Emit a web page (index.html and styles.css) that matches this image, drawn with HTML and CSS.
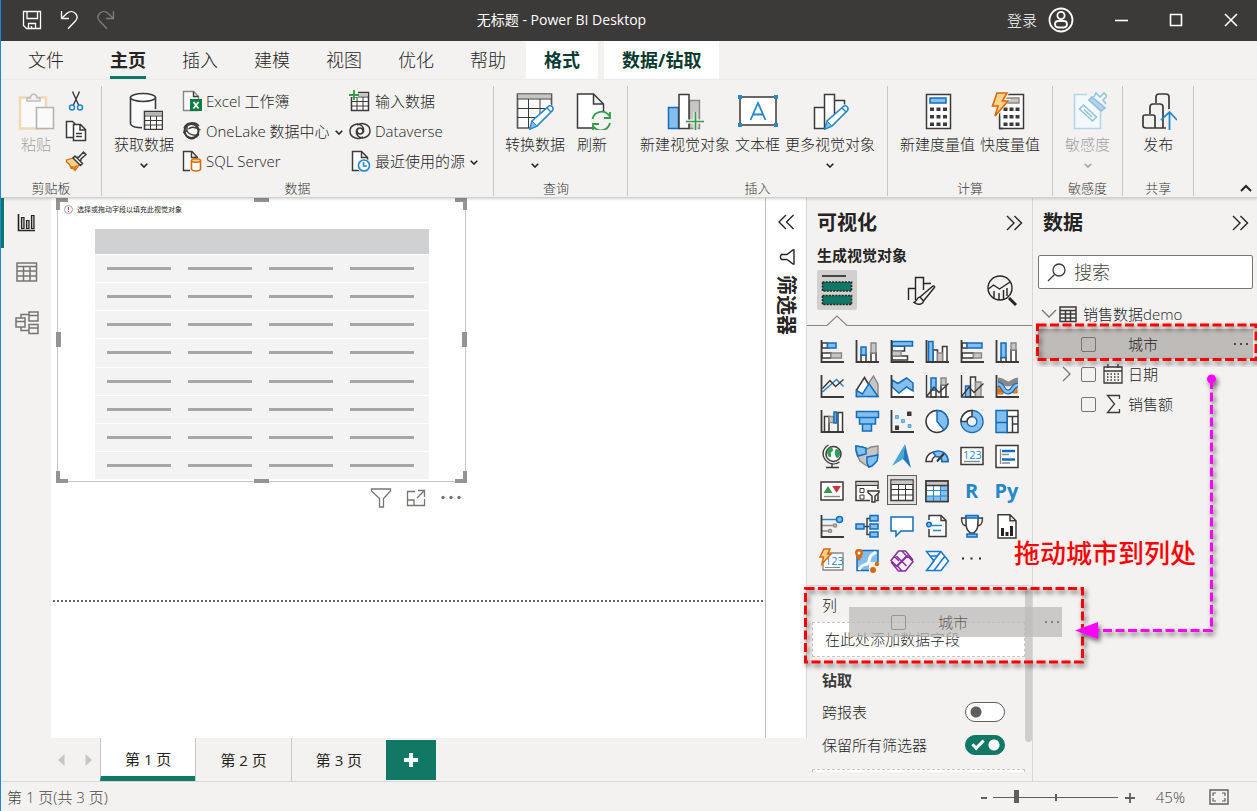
FILE: index.html
```html
<!DOCTYPE html>
<html lang="zh-CN">
<head>
<meta charset="utf-8">
<title>无标题 - Power BI Desktop</title>
<link rel="stylesheet" href="styles.css">
</head>
<body>
<div class="app">
<header class="titlebar">
  <div class="quick">
    <button aria-label="保存"><svg width="20" height="20" viewBox="0 0 20 20"><path class="wl" d="M1.500 1.500h17v17h-14l-3-3zM5 1.500v7h10.500v-7M6.500 18.500v-5h7v5M9.500 18.500v-2.500"/></svg></button>
    <button aria-label="撤消"><svg width="20" height="20" viewBox="0 0 20 20"><path class="wl" d="M2.500 1v7.500H10M2.500 8.500L8 3.200c3-2.500 6.500-2 8.500.3s2 5.500-.3 7.800L9 18.800"/></svg></button>
    <button aria-label="恢复"><svg width="20" height="20" viewBox="0 0 20 20"><path class="wl dim" d="M17.500 1v7.500H10M17.500 8.500L12 3.200c-3-2.500-6.500-2-8.500.3s-2 5.500.3 7.800l7.200 7.500"/></svg></button>
  </div>
  <h1>无标题 - Power BI Desktop</h1>
  <button class="login">登录 <svg width="26" height="26" viewBox="0 0 26 26"><circle cx="13" cy="13" r="11.500" fill="none" stroke="#fff" stroke-width="1.800"/><circle cx="13" cy="8.500" r="3.600" fill="none" stroke="#fff" stroke-width="1.800"/><rect x="7" y="14" width="12" height="6.500" rx="3.200" fill="none" stroke="#fff" stroke-width="1.800"/></svg></button>
  <div class="winctl">
    <button aria-label="最小化"><svg width="14" height="14" viewBox="0 0 14 14"><path class="wl2" d="M1 7.500h13"/></svg></button>
    <button aria-label="最大化"><svg width="14" height="14" viewBox="0 0 14 14"><path class="wl2" d="M1.500 1.500h11v11h-11z"/></svg></button>
    <button aria-label="关闭"><svg width="14" height="14" viewBox="0 0 14 14"><path class="wl2" d="M1 1l12 12M13 1L1 13"/></svg></button>
  </div>
</header>

<nav class="menu">
  <button class="file">文件</button><button class="on"><span>主页</span></button><button>插入</button><button>建模</button><button>视图</button><button>优化</button><button>帮助</button><button class="ctx">格式</button><button class="ctx">数据/钻取</button>
</nav>

<section class="ribbon">
  <div class="group clip">
    <div class="tools">
      <button class="big off"><svg width="38" height="38" viewBox="0 0 38 38"><path d="M3 5.500h26v31H3z" fill="#fafafa" stroke="#f0d9b4" stroke-width="2.500"/><path d="M10 9V6h3.500c0-5 6.500-5 6.500 0H23v3z" fill="#f3f2f1" stroke="#c1bfbd" stroke-width="1.600"/><path d="M19.500 15.500h17v21h-17z" fill="#fafafa" stroke="#b5b3b1" stroke-width="1.600"/></svg><span>粘贴</span></button>
      <div class="stack">
        <button class="small" aria-label="剪切"><svg width="22" height="22" viewBox="0 0 22 22"><path class="k" d="M7.500 1.500l6.300 14M14.500 1.500L8.200 15.500"/><circle class="bl" cx="7" cy="17.500" r="2.500"/><circle class="bl" cx="15" cy="17.500" r="2.500"/></svg></button>
        <button class="small" aria-label="复制"><svg width="22" height="22" viewBox="0 0 22 22"><path class="w" d="M1.500 1.500h6l3 3v13h-9z"/><path class="w" d="M8.500 4.500h7l5 5v11h-12zM15 5v5h5M11 13.500h6M11 16.500h6"/></svg></button>
        <button class="small" aria-label="格式刷"><svg width="22" height="22" viewBox="0 0 22 22"><path d="M1.500 10l7-2 6.500 6-5 6.500L7 17l-1 1-1.500-3.500L1.500 12z" fill="#fcd28b" stroke="#d8690b" stroke-width="1.300"/><path d="M5 16l4 .5 4-2-3.500 5.500z" fill="#e07a1c"/><path class="w" d="M8 8l2-2 7.500 7.500-2 2zM11.500 7.500l2.500-.5 4.500-5 2.500 2.500-5 4.500-.5 2.500"/></svg></button>
      </div>
    </div>
    <div class="label">剪贴板</div>
  </div>

  <div class="group data">
    <div class="tools">
      <button class="big"><svg width="38" height="38" viewBox="0 0 38 38"><path d="M5.500 5v27c2 5 22 5 25 0V5" fill="#fafafa" stroke="#3b3a39" stroke-width="1.600"/><ellipse cx="18" cy="5.500" rx="12.500" ry="4" class="w"/><path d="M17 17h22v22H17z" fill="#f3f2f1"/><path d="M19.500 19.500h18v18h-18z" class="w"/><path d="M20 20h17v3H20z" fill="#b9b7b5"/><path d="M19.500 24h18M19.500 28.500h18M19.500 33h18M25.500 24v13M31.500 24v13" class="k thin"/></svg><span>获取数据</span><svg class="chev" viewBox="0 0 8 5"><path d="M.7.700L4 4 7.300.700"/></svg></button>
      <div class="stack s1">
        <button class="small"><svg width="20" height="22" viewBox="0 0 20 22"><path d="M1.500 1.500h10l5 5v14h-15z" fill="#fafafa" stroke="#8a8886" stroke-width="1.400"/><path class="k" d="M11.500 1.500v5h5"/><rect x="8" y="9" width="12" height="12" fill="#107c41"/><path d="M11.500 12l5 6.500M16.500 12l-5 6.500" stroke="#fff" stroke-width="1.700"/></svg>Excel 工作簿</button>
        <button class="small"><svg width="20" height="22" viewBox="0 0 20 22"><circle cx="9.500" cy="11" r="7" fill="#fafafa" stroke="#3b3a39" stroke-width="2"/><path class="k" d="M2 8C4 2 13 1 17 6M1 12.500c4 0 5-4 3.500-8M18.500 10c-5-3-9-4-12-1M5 8c-1 5 4 8 12 7M17 14c-3 5-8 6-12 3"/></svg>OneLake 数据中心 <svg class="chev" viewBox="0 0 8 5"><path d="M.7.700L4 4 7.300.700"/></svg></button>
        <button class="small"><svg width="20" height="22" viewBox="0 0 20 22"><path d="M1.500 1.500h10l5 5v14h-15z" fill="#fafafa"/><path class="k" d="M8 20.500H1.500v-19H10l5.500 6M9.500 1.500v6H16"/><path d="M9.500 10.500v9c1.500 2 7.500 2 9 0v-9" fill="#fff" stroke="#d8690b" stroke-width="1.600"/><ellipse cx="14" cy="10.500" rx="4.500" ry="1.800" fill="#fcd28b" stroke="#d8690b" stroke-width="1.400"/></svg>SQL Server</button>
      </div>
      <div class="stack s2">
        <button class="small"><svg width="22" height="22" viewBox="0 0 22 22"><path class="w" d="M2.500 2.500h17v18h-17z"/><path d="M3 3h16v3H3z" fill="#c8c6c4"/><path class="k thin" d="M2.500 7h17M2.500 11.500h17M2.500 16h17M8 7v13M14 7v13"/><path d="M0 0h9v7H0z" fill="#f3f2f1"/><path d="M5 0v10M0 5h10" stroke="#359b49" stroke-width="1.800"/></svg>输入数据</button>
        <button class="small"><svg width="22" height="22" viewBox="0 0 22 22"><path d="M14 17c-5 3-13 1-13-6 0-6 8-9 12-5 3 3 2 8-2 8-3 0-4-4-1.500-5.500M8 5c5-3 13-1 13 6 0 6-8 9-12 5-3-3-2-8 2-8 3 0 4 4 1.500 5.500" fill="none" stroke="#3b3a39" stroke-width="1.500"/></svg>Dataverse</button>
        <button class="small"><svg width="22" height="22" viewBox="0 0 22 22"><path class="w" d="M3.500 1.500h9l6 6v13h-15z"/><path class="k" d="M12.500 1.500v6h6"/><circle cx="15" cy="15.500" r="7" fill="#f3f2f1"/><circle cx="15" cy="15.500" r="5.500" fill="#fff" stroke="#2488c9" stroke-width="1.600"/><path class="bl" d="M14.500 12v4h3.500"/></svg>最近使用的源 <svg class="chev" viewBox="0 0 8 5"><path d="M.7.700L4 4 7.300.700"/></svg></button>
      </div>
    </div>
    <div class="label">数据</div>
  </div>

  <div class="group query">
    <div class="tools">
      <button class="big"><svg width="40" height="38" viewBox="0 0 40 38"><path d="M2.500 2h34v34h-34z" fill="#fafafa" stroke="#5b5957" stroke-width="1.700"/><path d="M3 2.500h33v4H3z" fill="#c8c6c4"/><path d="M2.500 7h34M2.500 16.500h34M2.500 25.500h34M13.500 7v29M25 7v29" class="k thin"/><path d="M13 38h25l2-14v-8l-5-4z" fill="#f3f2f1"/><path d="M15 37l2-8 17-15c3-1 5 2 3.500 4.500L22 34z" fill="#fff" stroke="#2488c9" stroke-width="1.600"/><path d="M15 37l2-8 5 5z" fill="#83beec" stroke="#2488c9"/><path class="bl" d="M32 16l4 4"/></svg><span>转换数据</span><svg class="chev" viewBox="0 0 8 5"><path d="M.7.700L4 4 7.300.700"/></svg></button>
      <button class="big"><svg width="38" height="38" viewBox="0 0 38 38"><path d="M4.500 2h16l10 10v24h-26zM20.500 2v10h10" class="w"/><circle cx="28" cy="29" r="10" fill="#f3f2f1"/><path d="M19.500 27c2-8 12-10 17-3M37 20v6h-6M37 31c-2 8-12 10-17 3M20 38v-6h6" fill="none" stroke="#359b49" stroke-width="1.800"/></svg><span>刷新</span></button>
    </div>
    <div class="label">查询</div>
  </div>

  <div class="group insert">
    <div class="tools">
      <button class="big"><svg width="38" height="38" viewBox="0 0 38 38"><path class="b" d="M2.500 15.500h10v21h-10z"/><path class="g" d="M23.500 8.500h10v28h-10z"/><path class="w" d="M13 2.500h10v34H13z"/><path d="M29.500 20v20M19 29.500h20" stroke="#f3f2f1" stroke-width="4"/><path d="M29.500 20v18M20 29.500h19" stroke="#359b49" stroke-width="1.700"/></svg><span>新建视觉对象</span></button>
      <button class="big"><svg width="40" height="38" viewBox="0 0 40 38"><path class="w" d="M2 5h36v28H2z"/><path d="M0 3h4v4H0zM36 3h4v4h-4zM0 31h4v4H0zM36 31h4v4h-4z" fill="#2488c9"/><path d="M12.500 28L20 11l7.500 17M15.500 22.500h9" fill="none" stroke="#2488c9" stroke-width="1.800"/></svg><span>文本框</span></button>
      <button class="big"><svg width="38" height="38" viewBox="0 0 38 38"><path class="w" d="M3.500 15.500h10v21h-10zM23.500 8.500h10v28h-10zM13.500 2.500h10v34h-10z"/><path d="M13 38h23l2-14v-8l-5-4z" fill="#f3f2f1"/><path d="M14 37l2-8 17-15c3-1 5 2 3.500 4.500L21 34z" fill="#fff" stroke="#2488c9" stroke-width="1.600"/><path d="M14 37l2-8 5 5z" fill="#83beec" stroke="#2488c9"/><path class="bl" d="M31 16l4 4"/></svg><span>更多视觉对象</span><svg class="chev" viewBox="0 0 8 5"><path d="M.7.700L4 4 7.300.700"/></svg></button>
    </div>
    <div class="label">插入</div>
  </div>

  <div class="group calc">
    <div class="tools">
      <button class="big"><svg width="38" height="38" viewBox="0 0 38 38"><path class="w" d="M7.500 2.500h24v34h-24z"/><path class="b" d="M11 6h16v5H11z"/><path d="M13 15.500v20M19.500 15.500v20M26 15.500v20" stroke="#3b3a39" stroke-width="4" stroke-dasharray="3.500 4"/></svg><span>新建度量值</span></button>
      <button class="big"><svg width="38" height="38" viewBox="0 0 38 38"><path class="w" d="M8.500 2.500h24v34h-24z"/><path class="g" d="M13 6h15v5H13z"/><path d="M14.500 15.500v20M20.500 15.500v20M26.500 15.500v20" stroke="#3b3a39" stroke-width="4" stroke-dasharray="3.500 4"/><path d="M3-1h16l-4 8h5L8 22v16H6V22L0 28z" fill="#f3f2f1"/><path class="k" d="M8.500 24v12.500H12"/><path d="M6 1h10l-4.500 8H17L4 24l3-10H1.500z" fill="#fcd28b" stroke="#d8690b" stroke-width="1.600"/></svg><span>快度量值</span></button>
    </div>
    <div class="label">计算</div>
  </div>

  <div class="group sens">
    <div class="tools">
      <button class="big off"><svg width="38" height="38" viewBox="0 0 38 38"><path d="M18 2.500H5.500v34h26V20" fill="#f3f8fb" stroke="#b4d6e8" stroke-width="1.600"/><path d="M10.500 17l4-4 13 12-4 4zM15 17.500l8 7.500" fill="none" stroke="#93c3dc" stroke-width="1.600"/><path d="M20 8l3-3 13 11-4 3z" fill="#b4d6e8" stroke="#93c3dc" stroke-width="1.800"/><path d="M25 5l2-4 4 4 4-4 3 3-4 4 3 4" fill="#f3f8fb" stroke="#93c3dc" stroke-width="1.600"/></svg><span>敏感度</span><svg class="chev" viewBox="0 0 8 5"><path d="M.7.700L4 4 7.300.700"/></svg></button>
    </div>
    <div class="label">敏感度</div>
  </div>

  <div class="group share">
    <div class="tools">
      <button class="big"><svg width="38" height="38" viewBox="0 0 38 38"><path d="M6 23h8c2 0 2 1 2 2v11H7c-2 0-3-1-3-2v-9c0-1 1-2 2-2zM11 22v-7c0-2 1-3 3-3h7c2 0 3 1 3 3v21h-8M17 11V5c0-2 1-3 3-3h7c2 0 3 1 3 3v12M24 36h3" fill="none" stroke="#3b3a39" stroke-width="1.700"/><path d="M30.500 38V20M22 28l8.500-8 7.500 8" fill="none" stroke="#2488c9" stroke-width="1.800"/></svg><span>发布</span></button>
    </div>
    <div class="label">共享</div>
  </div>
  <button class="collapse" aria-label="折叠功能区"><svg width="12" height="8" viewBox="0 0 12 8"><path d="M1 7l5-5 5 5" fill="none" stroke="#252423" stroke-width="2"/></svg></button>
</section>

<main class="main">
  <nav class="rail">
    <button class="on" aria-label="报表视图"><svg width="24" height="24" viewBox="0 0 24 24"><path d="M3.500 3v16.500H20" fill="none" stroke="#252423" stroke-width="1.600"/><path d="M6.500 6.500h2.500v11H6.500zM11.500 9.500H14v8h-2.500zM16.500 4.500H19v13h-2.500z" fill="#bebbb8" stroke="#252423" stroke-width="1.200"/></svg></button>
    <button aria-label="表格视图"><svg width="24" height="24" viewBox="0 0 24 24"><path d="M2 2h19.500v18H2zM2 5.500h19.500M2 10h19.500M2 15h19.500M8.500 5.500V20M15 5.500V20" fill="none" stroke="#777572" stroke-width="1.500"/></svg></button>
    <button aria-label="模型视图"><svg width="24" height="24" viewBox="0 0 24 24"><path d="M1 7h9v9H1zM1 10.500h9M14 1h9v9h-9zM14 4.500h9M14 13.500h9v9h-9zM14 17h9M6 7V3.500h8M6 16v3.500h8" fill="none" stroke="#777572" stroke-width="1.500"/></svg></button>
  </nav>

  <div class="center">
    <div class="work">
      <div class="canvas">
        <div class="visual">
          <p class="hint"><svg width="9" height="9" viewBox="0 0 9 9"><circle cx="4.500" cy="4.500" r="4" fill="none" stroke="#8a8886" stroke-width=".8"/><path d="M4.500 2v3M4.500 6v1" stroke="#d13438"/></svg>选择或拖动字段以填充此视觉对象</p>
          <div class="skeleton">
            <div class="head"></div>
            <div class="r"><i></i><i></i><i></i><i></i></div><div class="r"><i></i><i></i><i></i><i></i></div><div class="r"><i></i><i></i><i></i><i></i></div><div class="r"><i></i><i></i><i></i><i></i></div><div class="r"><i></i><i></i><i></i><i></i></div><div class="r"><i></i><i></i><i></i><i></i></div><div class="r"><i></i><i></i><i></i><i></i></div><div class="r"><i></i><i></i><i></i><i></i></div>
          </div>
          <b class="h tl"></b><b class="h tm"></b><b class="h tr"></b><b class="h ml"></b><b class="h mr"></b><b class="h bl1"></b><b class="h bm"></b><b class="h br"></b>
          <div class="vtools">
            <button aria-label="筛选器"><svg width="22" height="22" viewBox="0 0 22 22"><path class="q" d="M1.500 2h19v2l-7 7.500V20h-4v-8.500L1.500 4z"/></svg></button>
            <button aria-label="焦点模式"><svg width="22" height="22" viewBox="0 0 22 22"><path class="q" d="M10 4.500H2.500v14h17V12M13 3.500h6.500V10M19.500 3.500L12 11M2.500 13H9v5.500"/></svg></button>
            <button aria-label="更多选项"><svg width="22" height="22" viewBox="0 0 22 22"><g fill="#777572"><circle cx="3" cy="10.500" r="1.700"/><circle cx="11" cy="10.500" r="1.700"/><circle cx="19" cy="10.500" r="1.700"/></g></svg></button>
          </div>
        </div>
        <div class="pageend"></div>
      </div>
      <aside class="filters">
        <button aria-label="展开"><svg width="18" height="18" viewBox="0 0 18 18"><path class="dk" d="M9 2L2 9l7 7M16.500 2l-7 7 7 7"/></svg></button>
        <svg width="18" height="18" viewBox="0 0 18 18"><path class="dk" d="M17 2v14h-1l-6-4.500H4.500l-1-1.500V8l1-1.500H10L16 2z"/></svg>
        <h2>筛选器</h2>
      </aside>
    </div>
    <div class="pages">
      <button class="arr" aria-label="上一页"><svg width="7" height="12" viewBox="0 0 7 12"><path d="M6.500 0v12L0 6z" fill="#c8c6c4"/></svg></button>
      <button class="arr" aria-label="下一页"><svg width="7" height="12" viewBox="0 0 7 12"><path d="M.5 0v12L7 6z" fill="#c8c6c4"/></svg></button>
      <button class="pg on">第 1 页</button><button class="pg">第 2 页</button><button class="pg">第 3 页</button>
      <button class="add" aria-label="新建页"><svg width="14" height="14" viewBox="0 0 14 14"><path d="M7 0v14M0 7h14" stroke="#fff" stroke-width="4"/></svg></button>
    </div>
  </div>

  <aside class="viz">
    <div class="phead"><h2>可视化</h2><button aria-label="折叠"><svg width="18" height="18" viewBox="0 0 18 18"><path class="dk" d="M2 2l7 7-7 7M9.500 2l7 7-7 7"/></svg></button></div>
    <h3>生成视觉对象</h3>
    <div class="modes">
      <button class="on" aria-label="生成"><svg width="34" height="34" viewBox="0 0 34 34"><path d="M2 3h24" stroke="#252423" stroke-width="1.600"/><path d="M2.500 9h29v9h-29zM2.500 22.500h29v9h-29z" fill="#117865" stroke="#252423" stroke-width="1.600" stroke-dasharray="2 1.200"/></svg></button>
      <button aria-label="格式"><svg width="34" height="34" viewBox="0 0 34 34"><path class="dk" d="M6.500 27V15.500h7M13.500 23V4.500h8V17M21.500 10.500H29M13.500 23v4"/><path class="dk" d="M18 24l13-11c2 0 2 1 1 2L21.500 28M18 24c-3 0-3 4-6 5.500 4 3 9 2 9.500-1.500z"/></svg></button>
      <button aria-label="分析"><svg width="34" height="34" viewBox="0 0 34 34"><circle class="dk" cx="17" cy="15" r="12"/><path class="dk" d="M5.500 16l5-4 6 4L27 9M11 18v7M16 20v7M20.500 17v10M24 15v8"/><path d="M26 25l7 7" stroke="#252423" stroke-width="3"/></svg></button>
    </div>
    <svg class="notch" width="225" height="12" viewBox="0 0 225 12"><path d="M0 10.500h20L30 1l10 9.500H225" fill="none" stroke="#8a8886" stroke-width="1.200"/></svg>
    <div class="gallery">
      <button aria-label="堆积条形图"><svg viewBox="0 0 24 24"><path class="w" d="M2 4h5.500v5H2zM2 14h9v5H2z"/><path class="b" d="M7.500 4H16v5H7.500z"/><path class="g" d="M11 14h10.500v5H11z"/><path class="k ax" d="M1.500 1v22H24"/></svg></button>
      <button aria-label="堆积柱形图"><svg viewBox="0 0 24 24"><path class="w" d="M6 16h5v7H6zM16 14h5v9h-5z"/><path class="b" d="M6 8h5v8H6z"/><path class="g" d="M16 4h5v10h-5z"/><path class="k ax" d="M1.500 1v22H24"/></svg></button>
      <button aria-label="簇状条形图"><svg viewBox="0 0 24 24"><path class="w" d="M2 7h12.500v5H2zM2 17h15.500v4H2z"/><path class="g" d="M2 12h9v5H2z"/><path class="b" d="M2 2.500h20.500V7H2z"/><path class="k ax" d="M1.500 1v22H24"/></svg></button>
      <button aria-label="簇状柱形图"><svg viewBox="0 0 24 24"><path class="w" d="M8 11h4.500v12H8zM17.500 7.500h4.500V23h-4.500z"/><path class="g" d="M12.500 14h5v9h-5z"/><path class="b" d="M3.500 2.500H8V23H3.500z"/><path class="k ax" d="M1.500 1v22H24"/></svg></button>
      <button aria-label="百分比堆积条形图"><svg viewBox="0 0 24 24"><path class="w" d="M2 4h5v5H2zM2 14h11.500v5H2z"/><path class="b" d="M7 4h15v5H7z"/><path class="g" d="M13.500 14h8v5h-8z"/><path class="k ax" d="M1.500 1v22H24"/></svg></button>
      <button aria-label="百分比堆积柱形图"><svg viewBox="0 0 24 24"><path class="w" d="M6 18.500h5V23H6zM16 11h5v12h-5z"/><path class="b" d="M6 4h5v14.500H6z"/><path class="g" d="M16 4h5v7h-5z"/><path class="k ax" d="M1.500 1v22H24"/></svg></button>

      <button aria-label="折线图"><svg viewBox="0 0 24 24"><path class="bl" d="M2.500 18l14-12.500 7 7"/><path class="k" d="M2.500 14.500l7.500-8 5.500 6 8-7"/><path class="k ax" d="M1.500 1v22H24"/></svg></button>
      <button aria-label="分区图"><svg viewBox="0 0 24 24"><path class="g" d="M13 10l5.500-8 4.500 8v12.500H13z"/><path class="w" d="M1.500 22.500V16l8-12.500L17 16v6z"/><path class="b" d="M1.500 16.500l6 3.500L14 9.500l9 13H1.500z"/></svg></button>
      <button aria-label="堆积面积图"><svg viewBox="0 0 24 24"><path fill="#fff" d="M2 13l7 6 8-6 6 4v6H2z"/><path class="b" d="M2 6l6 3.500L16.500 4l6.500 5v8l-6.500-4L9 19l-7-6z"/><path class="k ax" d="M1.500 1v22H24"/></svg></button>
      <button aria-label="折线和堆积柱形图"><svg viewBox="0 0 24 24"><path class="w" d="M6 16h5v7H6zM16 11h5v12h-5z"/><path class="b" d="M6 4h5v12H6z"/><path class="g" d="M16 4h5v7h-5z"/><path class="k" d="M2 22l7-9 5 5.500 9.500-9M1.500 1v22H24"/></svg></button>
      <button aria-label="折线和簇状柱形图"><svg viewBox="0 0 24 24"><path class="b" d="M5.500 12h5v11h-5z"/><path class="w" d="M10.500 3h5v20h-5z"/><path class="g" d="M15.500 8H21v15h-5.500z"/><path class="k" d="M2 22l7-9 5 5.500 9.500-9M1.500 1v22H24"/></svg></button>
      <button aria-label="功能区图表"><svg viewBox="0 0 24 24"><path d="M3 12h5v8H3zM18 10h4v9h-4z" fill="#f08a24" stroke="#d8690b"/><path d="M3 17c6-1 7 1 10 1s5-8 10-8" fill="none" stroke="#d8690b" stroke-width="3"/><path d="M3 6c6 0 6 4 10 4s5-4 10-4" fill="none" stroke="#8a8886" stroke-width="5"/><path d="M3 10c6 0 4 8 10 8s4-7 10-7" fill="none" stroke="#106ebe" stroke-width="5"/><path d="M3 10c6 0 4 8 10 8s4-7 10-7" fill="none" stroke="#83beec" stroke-width="2.500"/><path class="k ax" d="M1.500 1v22H24"/></svg></button>

      <button aria-label="瀑布图"><svg viewBox="0 0 24 24"><path class="w" d="M4.500 7.500H9V23H4.500zM18 3.500h4.500V23H18z"/><path class="g" d="M9 7.500h4.500v6H9z"/><path class="b" d="M14 3h2.500v11H14z"/><path class="k ax" d="M1.500 1v22H24"/></svg></button>
      <button aria-label="漏斗图"><svg viewBox="0 0 24 24"><path class="b" d="M1.500 2.500h22v6h-22zM4.500 8.500h16V15h-16zM7.500 15h9v7h-9z"/></svg></button>
      <button aria-label="散点图"><svg viewBox="0 0 24 24"><path d="M17 2.500h4.500V7H17zM5 16.500h4V21H5z" fill="#3b3a39"/><path d="M5.500 6.500h3v3h-3zM11.500 10.500h3v3h-3zM18 15.500h3v3h-3z" fill="#83beec" stroke="#2488c9" stroke-width=".6"/><path class="k ax" d="M1.500 1v22H24"/></svg></button>
      <button aria-label="饼图"><svg viewBox="0 0 24 24"><circle class="w" cx="12" cy="12.500" r="11"/><path class="b" d="M12 12.500v-11a11 11 0 0 1 7 19.500z"/></svg></button>
      <button aria-label="环形图"><svg viewBox="0 0 24 24"><circle cx="12" cy="12.500" r="8" fill="none" stroke="#106ebe" stroke-width="7.500"/><circle cx="12" cy="12.500" r="8" fill="none" stroke="#83beec" stroke-width="5"/><path class="w" d="M1 12.500A11 11 0 0 1 12 1.500v6a5 5 0 0 0-5 5z"/></svg></button>
      <button aria-label="树状图"><svg viewBox="0 0 24 24"><path class="w" d="M12 1.500h11v22H12zM12 7.500h11M17.500 7.500v16M17.500 15H23"/><path class="b" d="M1 1.500h11v22H1zM1 13.500h11"/></svg></button>

      <button aria-label="地图"><svg viewBox="0 0 24 24"><circle class="w" cx="13.500" cy="10" r="7.500"/><path d="M8 5c3-3 5-1 5 1s-3 2-2 4-1 4-2 3-3-5-1-8zM16 5c3 0 5 3 4 6s-3 4-4 2-2-5 0-8z" fill="#2f9e57"/><path class="k" d="M8.500 1c-7 4-7 12-1 17 4 3 9 2 12 0M12 19v4M6 23.500h13"/></svg></button>
      <button aria-label="着色地图"><svg viewBox="0 0 24 24"><path class="g" d="M1 2l6 1 5 2 4-2 7-1v7l-2 3 1 4-3 4-5 3-5-3-4-3-3-6-1-4z"/><path class="b" d="M1 2l6 1 4 1v6L3 12l-2-6zM12 13l11-2-1 6-5 5-3 1-2-4z"/></svg></button>
      <button aria-label="Azure 地图"><svg viewBox="0 0 24 24"><path d="M15 0L2 22l11-7z" fill="#46a6d9"/><path d="M15 0l6 24-8-9z" fill="#2079bd"/></svg></button>
      <button aria-label="仪表"><svg viewBox="0 0 24 24"><path class="w" d="M1 17.500C1 4 23 4 23 17.500h-6c0-7-10-7-10 0z"/><path class="b" d="M8 8.500c8-4 15 1 15 9h-6c0-4-3-5-6-5z"/><path d="M19 9.500l-7 8" stroke="#3b3a39" stroke-width="2"/></svg></button>
      <button aria-label="卡片图"><svg viewBox="0 0 24 24"><path class="w" d="M1 3.500h22v17H1z"/><text x="3" y="15" class="num">123</text><path d="M4 17.500h16" stroke="#8a8886" stroke-width="1.400"/></svg></button>
      <button aria-label="多行卡"><svg viewBox="0 0 24 24"><path class="w" d="M1 1.500h22v22H1z"/><path d="M5.500 5v15" stroke="#8a8886" stroke-width="1.300"/><path d="M7 7h13M7 15.500h13" stroke="#106ebe" stroke-width="2.500"/><path d="M7 10.500h7M7 19h8" stroke="#8a8886" stroke-width="1.400"/></svg></button>

      <button aria-label="KPI"><svg viewBox="0 0 24 24"><path class="w" d="M1 3h22v18H1z"/><path d="M3.500 14l4.500-7 4.500 7z" fill="#359b49"/><path d="M12.500 7H21l-4.500 7z" fill="#d13438"/><path d="M4 17.500h16" stroke="#8a8886" stroke-width="1.400"/></svg></button>
      <button aria-label="切片器"><svg viewBox="0 0 24 24"><path class="w" d="M1 2.500h22v19H1z"/><path d="M1.500 3h21v3.500h-21z" fill="#c8c6c4"/><path class="k thin" d="M1 6.500h22M5 9.500h4v4H5zM5 16h4v4H5z"/><path d="M11 10h14v3l-4 4v8h-6v-8l-4-4z" fill="#f3f2f1"/><path class="w" d="M13 12h11v1.500L20 17v6h-3v-6l-4-3.500z"/></svg></button>
      <button class="sel" aria-label="表"><svg viewBox="0 0 24 24"><path class="w" d="M1 2h22v20.500H1z"/><path d="M1.500 2.500h21V6h-21z" fill="#c8c6c4"/><path class="k thin" d="M1 6.500h22M1 11.500h22M1 17h22M8.500 6.500v16M15.500 6.500v16"/></svg></button>
      <button aria-label="矩阵"><svg viewBox="0 0 24 24"><path class="w" d="M1 2h22v20.500H1z"/><path d="M1.500 2.500h21V6h-21z" fill="#c8c6c4"/><path d="M15.500 7H23v15.500H1V17h14.500z" fill="#83beec"/><path class="bl thin" d="M1 11.500h22M1 17h22M8.500 6.500v16M15.500 6.500v16"/><path class="k" d="M1 2h22v20.500H1zM1 6.500h22"/></svg></button>
      <button class="let">R</button>
      <button class="let">Py</button>

      <button aria-label="关键影响者"><svg viewBox="0 0 24 24"><path class="bl" d="M2 5.500h14"/><circle class="b" cx="19.500" cy="5.500" r="3"/><path d="M2 11.500h11M2 17h6" stroke="#8a8886" stroke-width="1.400"/><circle class="g" cx="15" cy="11.500" r="1.600"/><circle class="g" cx="10" cy="17" r="1.600"/><path class="k ax" d="M1.500 1v22H24"/></svg></button>
      <button aria-label="分解树"><svg viewBox="0 0 24 24"><path class="k" d="M8 12.500h6M12 12.500v-8h3M12 12.500v8h3"/><path class="b" d="M1 10h8v5H1zM15 1.500h8V7h-8zM15 10h8v5h-8zM15 18h8v5h-8z"/></svg></button>
      <button aria-label="问答"><svg viewBox="0 0 24 24"><path d="M1 3h22v14H11l-5 5v-5H1z" fill="#fff" stroke="#106ebe" stroke-width="1.500"/></svg></button>
      <button aria-label="智能叙述"><svg viewBox="0 0 24 24"><path class="w" d="M4 6V1.500h12l5 5v16H4V15"/><path class="k" d="M16 1.500v5h5"/><circle class="b" cx="4" cy="10.500" r="2.300"/><path class="bl" d="M7 11.500h10M8 16.500h8"/></svg></button>
      <button aria-label="目标"><svg viewBox="0 0 24 24"><path class="k" d="M6 4H1.500c0 5 1 8 6 8M18 4h4.500c0 5-1 8-6 8"/><path class="w" d="M6 2h12v7c0 9-4 8-4 10h-4c0-2-4-1-4-10z"/><path class="b" d="M6 1.500h12V4H6zM7 20h10v3H7z"/></svg></button>
      <button aria-label="分页报表"><svg viewBox="0 0 24 24"><path class="w" d="M3 .8h12l6 6V24H3zM15 .8v6h6"/><path d="M6 14h3v8H6zM10.500 18h3v4h-3zM15 12h3v10h-3z" fill="#252423"/></svg></button>

      <button aria-label="新卡片图"><svg viewBox="0 0 24 24"><path d="M8 4h15v17H3v-8" fill="#fff" stroke="#8a8886" stroke-width="1.400"/><text x="5" y="16" class="num">123</text><path d="M5 18.500h15" stroke="#8a8886"/><path d="M4 0h6L7.500 5H11L2 15l1.500-7H0z" fill="#fcd28b" stroke="#d8690b" stroke-width="1.500"/></svg></button>
      <button aria-label="ArcGIS"><svg viewBox="0 0 24 24"><path class="b" d="M2 1.500h21v20H2z"/><path d="M4 21c3-8 9-3 10-9s3-6 7-9" fill="none" stroke="#fff" stroke-width="3"/><path d="M14 13h11v11H14z" fill="#f3f2f1"/><path d="M0 3c0-4 8-4 8 0 0 4-4 9-4 9S0 7 0 3z" fill="#d8690b"/><circle cx="4" cy="4" r="1.500" fill="#fff"/><circle cx="18" cy="21" r="3" fill="#d8690b"/><circle cx="22" cy="15" r="2.200" fill="#d8690b"/></svg></button>
      <button aria-label="Power Apps"><svg viewBox="0 0 24 24"><path d="M8.500 2H12l4.500 5-10 10L1 11.500zM15.500 22H12l-4.500-5 10-10 5.500 5.500zM6.500 7l10 10M12 2l3.500 0 7.500 9M12 22H8.500L1 13M4 7l5 5" fill="none" stroke="#8b2fa0" stroke-width="1.500"/></svg></button>
      <button aria-label="Power Automate"><svg viewBox="0 0 24 24"><path d="M1.500 2.500H16l7.500 9.500-7.500 9.500H1.500L9 12zM5 7h7l4-4.500M9 12L4 18.500M16 2.500L7 14M20 7L9 21.500" fill="#fff" stroke="#1478d4" stroke-width="1.500"/></svg></button>
      <button aria-label="更多视觉对象"><svg viewBox="0 0 24 24"><path d="M2 8.500h2v2H2zM10.500 8.500h2v2h-2zM19 8.500h2v2h-2z" fill="#252423"/></svg></button>
    </div>
    <div class="fields">
      <div class="fcol">
        <h4>列</h4>
        <div class="drop">在此处添加数据字段</div>
        <h4 class="drill">钻取</h4>
        <label class="sw"><span>跨报表</span><input type="checkbox"></label>
        <label class="sw"><span>保留所有筛选器</span><input type="checkbox" checked></label>
        <div class="drop next"></div>
      </div>
      <div class="scroll"></div>
    </div>
  </aside>

  <aside class="fieldspane">
    <div class="phead"><h2>数据</h2><button aria-label="折叠"><svg width="18" height="18" viewBox="0 0 18 18"><path class="dk" d="M2 2l7 7-7 7M9.500 2l7 7-7 7"/></svg></button></div>
    <label class="search"><svg width="20" height="20" viewBox="0 0 20 20"><circle cx="12" cy="8" r="6" fill="none" stroke="#3b3a39" stroke-width="1.300"/><path d="M7.500 12.500L1 19" stroke="#3b3a39" stroke-width="1.300"/></svg><input type="text" placeholder="搜索" aria-label="搜索"></label>
    <div class="trow root"><svg width="16" height="18" viewBox="0 0 16 18"><path class="q" d="M1 5l7 7 7-7"/></svg><svg width="18" height="18" viewBox="0 0 18 18"><path d="M1 2h16v14.500H1zM1 5.500h16M1 9h16M1 13h16M6.500 5.500v11M11.500 5.500v11" fill="none" stroke="#3b3a39" stroke-width="1.500"/></svg><span>销售数据demo</span></div>
    <div class="trow sel"><i class="arrow"></i><input type="checkbox" id="f1"><i class="kind"></i><label for="f1">城市</label><button aria-label="更多"><svg width="16" height="4" viewBox="0 0 16 4"><path d="M1 1h2v2H1zM7 1h2v2H7zM13 1h2v2h-2z" fill="#484644"/></svg></button></div>
    <div class="trow"><i class="arrow"><svg width="10" height="16" viewBox="0 0 10 16"><path class="q" d="M1 1l7 7-7 7"/></svg></i><input type="checkbox" id="f2"><i class="kind"><svg width="20" height="20" viewBox="0 0 20 20"><path d="M1 3h18v16H1zM1 7h18M5 0v4M15 0v4" fill="none" stroke="#3b3a39" stroke-width="1.300"/><path d="M4 10h13M4 13h13M4 16h13" stroke="#3b3a39" stroke-width="1.500" stroke-dasharray="1.500 2"/></svg></i><label for="f2">日期</label></div>
    <div class="trow"><i class="arrow"></i><input type="checkbox" id="f3"><i class="kind"><svg width="20" height="20" viewBox="0 0 20 20"><path d="M16.500 5V1.500h-12l7 8.500-7 8.500h12V15" fill="none" stroke="#3b3a39" stroke-width="1.300"/></svg></i><label for="f3">销售额</label></div>
  </aside>

  <div class="overlay">
    <div class="ghost"><i class="box"></i><span>城市</span><svg width="16" height="4" viewBox="0 0 16 4"><path d="M1 1h2v2H1zM7 1h2v2H7zM13 1h2v2h-2z" fill="#807e7c"/></svg></div>
    <svg class="marks" width="457" height="480" viewBox="800 198 457 480">
      <defs><filter id="sh" x="-20%" y="-20%" width="140%" height="140%"><feDropShadow dx="2" dy="3" stdDeviation="2.500" flood-color="#000" flood-opacity=".6"/></filter></defs>
      <g filter="url(#sh)"><path d="M1037.500 325H1256v34.500h-218.500z" class="red"/></g>
      <g filter="url(#sh)"><path d="M805.500 588.500h277v73.500h-277z" class="red"/></g>
      <g filter="url(#sh)"><path d="M1211.500 380v250.500H1098" fill="none" stroke="#f0f" stroke-width="3" stroke-dasharray="9 3.500"/><circle cx="1211.500" cy="379" r="4.500" fill="#f0f"/><path d="M1075 630.500l23-8.500v17z" fill="#f0f"/></g>
    </svg>
    <p class="note">拖动城市到列处</p>
  </div>
</main>

<footer class="status">
  <span>第 1 页(共 3 页)</span>
  <div class="zoom">
    <button aria-label="缩小"><svg width="8" height="14" viewBox="0 0 8 14"><path d="M1 8h6" stroke="#605e5c" stroke-width="2"/></svg></button>
    <input type="range" min="0" max="100" value="18" aria-label="缩放">
    <button aria-label="放大"><svg width="10" height="14" viewBox="0 0 10 14"><path d="M0 8h10M5 3v10" stroke="#605e5c" stroke-width="1.800"/></svg></button>
    <output>45%</output>
    <button aria-label="调整到页面大小"><svg width="20" height="16" viewBox="0 0 20 16"><path d="M1 1h18v14H1z" fill="none" stroke="#605e5c" stroke-width="1.400"/><path d="M4 7V4h3M13 4h3v3M16 9v3h-3M7 12H4V9" fill="none" stroke="#605e5c" stroke-width="1.200"/></svg></button>
  </div>
</footer>
</div>
</body>
</html>
```
FILE: styles.css
```css
*, *::before { box-sizing: border-box; }
body { margin: 0; font: 300 15px/20px "Open Sans", "Noto Sans CJK SC", sans-serif; color: #252423; background: #f3f2f1; }
button { font: inherit; color: inherit; background: none; border: 0; padding: 0; margin: 0; }
h1, h2, h3, h4, p { margin: 0; font: inherit; }
svg { display: block; flex: none; }
input { margin: 0; font: inherit; }
.app { height: 100vh; display: flex; flex-direction: column; border-left: 1px solid #1a86dd; overflow: hidden; }

.k { fill: none; stroke: #3b3a39; stroke-width: 1.4; }
.w { fill: #fff; stroke: #3b3a39; stroke-width: 1.5; }
.b { fill: #83beec; stroke: #106ebe; stroke-width: 1.5; }
.g { fill: #c8c6c4; stroke: #8a8886; stroke-width: 1.4; }
.bl { fill: none; stroke: #2488c9; stroke-width: 1.5; }
.dk { fill: none; stroke: #252423; stroke-width: 1.4; }
.q { fill: none; stroke: #777572; stroke-width: 1.3; }
.thin { stroke-width: 1; }
.ax { stroke-width: 1.8; }
.num { font: 400 11px "Open Sans", sans-serif; fill: #2488c9; }

.titlebar { flex: none; height: 41px; background: #3b3a38; color: #fff; display: flex; align-items: center; padding: 0 19px 2px 21px; }
.quick { display: flex; gap: 17px; }
.wl { fill: none; stroke: #fff; stroke-width: 1.3; }
.dim { stroke: #807e7c; }
.wl2 { fill: none; stroke: #fff; stroke-width: 1.6; }
.titlebar h1 { flex: 1; text-align: center; font-weight: 400; font-size: 14px; }
.login { display: flex; align-items: center; gap: 11px; }
.winctl { display: flex; gap: 41px; margin-left: 40px; }

.menu { flex: none; height: 39px; display: flex; padding-left: 9px; font-size: 18px; line-height: 38px; }
.menu button { padding: 0 18px; height: 38px; }
.menu .file { margin-right: 10px; }
.menu .on { font-weight: 700; }
.menu .on span { display: block; height: 38px; border-bottom: 3px solid #117865; }
.menu .ctx { background: #fff; font-weight: 700; color: #0b3a31; margin-left: 2px; }
.menu .ctx + .ctx { margin-left: 6px; }

.ribbon { flex: none; height: 118px; padding-top: 6px; display: flex; border-bottom: 1px solid #d2d0ce; box-shadow: 0 1px 3px rgba(0,0,0,.18); position: relative; z-index: 1; }
.group { height: 110px; border-right: 1px solid #c8c6c4; display: flex; flex-direction: column; padding: 0 12px; }
.tools { flex: 1; display: flex; gap: 5px; justify-content: center; }
.label { text-align: center; font-size: 13px; line-height: 16px; color: #3b3a39; }
.big { display: flex; flex-direction: column; align-items: center; padding-top: 6px; white-space: nowrap; }
.big > svg { margin: 0 -5px; }
.big span { margin-top: 4px; }
.off { color: #a3a19f; }
.chev { width: 8px; height: 5px; fill: none; stroke: currentColor; stroke-width: 1.6; }
.big > .chev { margin: 9px 0 0; }
.stack { display: flex; flex-direction: column; }
.small { height: 30px; display: flex; align-items: center; gap: 4px; white-space: nowrap; }
.small .chev { margin: 3px 0 0 1px; }
.clip { width: 101px; padding: 0 14px 0 20px; }
.clip .tools { gap: 14px; justify-content: flex-start; }
.clip .label { padding-right: 6px; }
.data { width: 392px; }
.data .tools { justify-content: flex-start; gap: 8px; }
.s1 { width: 159px; }
.query { padding: 0 20px 0 11px; }
.query .tools { gap: 12px; }
.share { padding: 0 20px; }
.collapse { margin: auto 5px 5px auto; }

.main { flex: 1; min-height: 0; display: flex; position: relative; border-bottom: 1px solid #d9d7d5; }
.rail { width: 50px; display: flex; flex-direction: column; }
.rail button { height: 50px; display: flex; align-items: center; justify-content: center; border-left: 3px solid transparent; padding-right: 2px; }
.rail .on { border-color: #117865; }
.center { flex: 1; min-width: 0; display: flex; flex-direction: column; }
.work { flex: 1; display: flex; background: #fff; }
.canvas { flex: 1; position: relative; }
.visual { position: absolute; left: 6px; top: 0; width: 409px; height: 284px; border: 1px solid #c8c6c4; border-top: 0; padding: 31px 36px 0 37px; }
.hint { position: absolute; left: 6px; top: 7px; display: flex; align-items: center; gap: 4px; font-size: 7px; line-height: 9px; white-space: nowrap; color: #252423; font-weight: 400; }
.skeleton { display: grid; grid-template-rows: 25px repeat(8, 1fr); row-gap: 1px; height: 250px; }
.skeleton .head { background: #d0d1d3; }
.skeleton .r { background: #f3f3f3; display: grid; grid-template-columns: repeat(4, 1fr); gap: 17px; padding: 0 15px 0 12px; align-items: center; }
.skeleton i { height: 3px; background: #a6a6a6; }
.h { position: absolute; background: #969492; width: 5px; height: 15px; }
.tm, .bm { width: 15px; height: 4px; left: 196px; }
.tm { top: 0; } .bm { bottom: -2px; }
.ml, .mr { top: 139px; }
.ml { left: -2px; } .mr { right: -2px; }
.ml, .mr { margin-top: -5px; }
.tl, .tr, .bl1, .br { background: none; border: 0 solid #969492; width: 12px; height: 12px; }
.tl { left: -2px; top: 0; border-width: 4px 0 0 4px; }
.tr { right: -2px; top: 0; border-width: 4px 4px 0 0; }
.bl1 { left: -2px; bottom: -2px; border-width: 0 0 4px 4px; }
.br { right: -2px; bottom: -2px; border-width: 0 4px 4px 0; }
.vtools { position: absolute; right: 3px; top: 289px; display: flex; gap: 13px; }
.pageend { position: absolute; left: 2px; right: 2px; top: 402px; border-top: 2px dotted #666; }
.filters { width: 42px; border-left: 1px solid #c0bebc; border-right: 1px solid #d9d7d5; display: flex; flex-direction: column; align-items: center; padding-top: 15px; gap: 17px; }
.filters h2 { writing-mode: vertical-rl; text-orientation: sideways; font-weight: 700; font-size: 20px; line-height: 24px; margin-top: -8px; }
.pages { flex: none; height: 43px; display: flex; }
.arr { margin-left: 7px; width: 7px; }
.arr + .arr { margin: 0 8px 0 20px; }
.pg { padding: 0 24px; border-left: 1px solid #c8c6c4; font-weight: 400; }
.pg.on { background: #fff; border-bottom: 5px solid #117865; padding-top: 3px; }
.add { width: 50px; height: 40px; margin-top: 2px; background: #117865; display: flex; align-items: center; justify-content: center; }

.phead { display: flex; justify-content: space-between; align-items: center; height: 50px; padding: 0 8px 0 10px; }
.phead h2 { font-size: 20px; font-weight: 700; line-height: 24px; }
.viz { width: 225px; display: flex; flex-direction: column; }
.viz .phead { padding-right: 9px; }
.viz h3 { font-weight: 700; padding-left: 10px; line-height: 14px; }
.modes { display: flex; justify-content: space-between; padding: 8px 12px 0 10px; }
.modes button { width: 40px; height: 40px; display: flex; align-items: center; justify-content: center; border-radius: 2px; }
.modes .on { background: #d2d0ce; }
.notch { margin-top: 5px; }
.gallery { display: grid; grid-template-columns: repeat(6, 35px); grid-auto-rows: 35px; padding: 6px 8px 7px 7px; border-bottom: 1px solid #d9d7d5; }
.gallery button { display: flex; align-items: center; justify-content: center; }
.gallery svg { width: 24px; height: 24px; overflow: visible; }
.gallery .sel { margin: 2px 2px 3px 3px; border: 1px solid #605e5c; background: #e1dfdd; }
.gallery .let { font-size: 20px; font-weight: 700; color: #2488c9; }
.fields { flex: 1; min-height: 0; display: flex; overflow: hidden; }
.fcol { flex: 1; padding: 8px 0 0 5px; }
.fcol h4 { padding-left: 10px; line-height: 22px; }
.drop { background: #fff; border: 1px dashed #c8c6c4; padding: 5px 12px; height: 35px; line-height: 22px; margin-top: 6px; }
.fcol .drill { font-weight: 600; margin-top: 12px; color: #3b3a39; }
.sw { display: flex; align-items: center; justify-content: space-between; padding: 0 20px 0 10px; height: 33px; margin-top: 4px; }
.sw + .sw { margin-top: 0; }
.sw input { appearance: none; width: 40px; height: 20px; border: 1px solid #605e5c; border-radius: 10px; background: #fff radial-gradient(circle at 10px 9px, #605e5c 5px, transparent 6px); }
.sw input:checked { border-color: #117865; background: #117865 radial-gradient(circle at 28px 9px, #fff 5px, transparent 6px); }
.sw input:checked::before { content: ""; display: block; width: 12px; height: 7px; margin: 4px 0 0 6px; border: solid #fff; border-width: 0 0 3px 3px; transform: rotate(-45deg); }
.drop.next { height: 3px; padding: 0; border-bottom: 0; margin-top: 8px; }
.scroll { width: 7px; height: 154px; margin-top: 2px; background: #d0cecc; border-radius: 4px; }

.fieldspane { width: 225px; border-left: 1px solid #d9d7d5; }
.search { display: flex; align-items: center; gap: 7px; height: 34px; margin: 7px 4px 10px 5px; border: 1px solid #777572; border-radius: 2px; background: #fff; padding: 0 8px; }
.search input { border: 0; outline: 0; flex: 1; min-width: 0; background: none; font-size: 18px; line-height: 26px; padding: 0; }
.search input::placeholder { color: #484644; opacity: 1; }
.trow { height: 30px; display: flex; align-items: center; margin: 0 4px 0 5px; }
.root { gap: 2px; padding-left: 3px; }
.root span { margin-left: 4px; }
.trow.sel { background: #bebbb8; }
.arrow { width: 43px; padding-left: 24px; flex: none; }
.kind { width: 32px; padding-left: 7px; flex: none; }
.trow input { appearance: none; width: 15px; height: 15px; border: 1px solid #777572; border-radius: 2px; flex: none; }
.trow label { flex: 1; }
.trow button { margin-right: 4px; }

.overlay { position: absolute; right: 0; top: 0; width: 457px; height: 480px; pointer-events: none; z-index: 2; }
.marks { position: absolute; left: 0; top: 0; overflow: visible; }
.red { fill: none; stroke: #f00; stroke-width: 3; stroke-dasharray: 9 3.5; }
.note { position: absolute; left: 214px; top: 338px; font: 500 26px/32px "Noto Sans CJK SC", sans-serif; color: #f00; white-space: nowrap; }
.ghost { position: absolute; left: 49px; top: 409px; width: 213px; height: 30px; display: flex; align-items: center; padding: 0 2px 0 42px; background: rgba(190,187,184,.75); color: #605e5c; }
.ghost .box { width: 15px; height: 15px; border: 1px solid #989694; border-radius: 2px; }
.ghost span { flex: 1; margin-left: 32px; }

.status { flex: none; height: 29px; display: flex; justify-content: space-between; align-items: center; padding: 0 28px 0 6px; color: #484644; font-weight: 300; }
.zoom { display: flex; align-items: center; }
.zoom input { appearance: none; width: 125px; height: 14px; margin: 0 7px 0 5px; background: linear-gradient(#605e5c, #605e5c) 62px 4px / 2px 7px no-repeat, linear-gradient(#605e5c, #605e5c) 0 7px / 100% 1px no-repeat; }
.zoom input::-webkit-slider-thumb { appearance: none; width: 5px; height: 13px; background: #605e5c; }
.zoom output { margin: 0 24px 0 21px; }
```
